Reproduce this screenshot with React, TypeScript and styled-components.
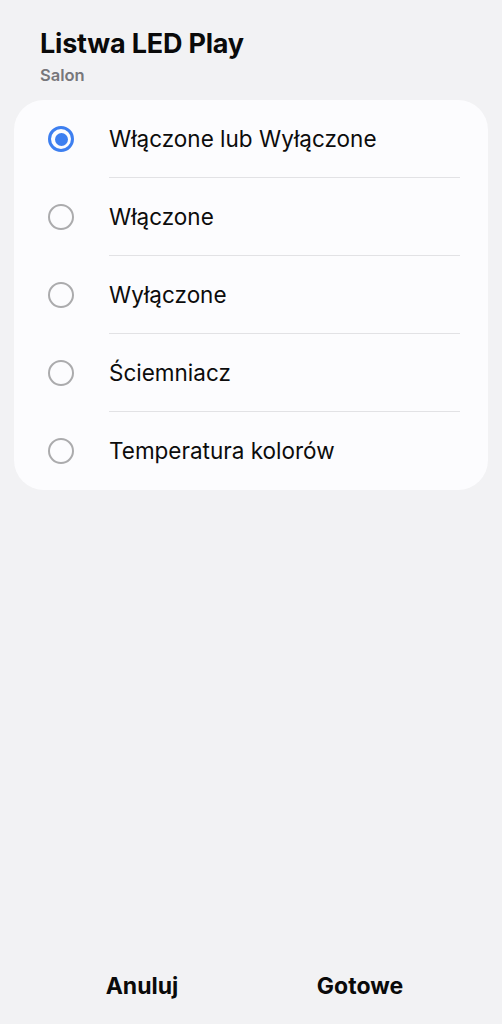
import React, { useState } from "react";
import styled, { createGlobalStyle } from "styled-components";

const Global = createGlobalStyle`
  html, body { margin: 0; padding: 0; background: #f2f2f4; }
  body { font-family: Inter, "Noto Sans", sans-serif; -webkit-font-smoothing: antialiased; }
  #root { min-height: 1024px; }
`;

const Page = styled.div`
  height: 1024px;
  display: flex;
  flex-direction: column;
  background: #f2f2f4;
  box-sizing: border-box;
`;

const Header = styled.header`
  padding: 28px 40px 0 40px;
  display: flex;
  flex-direction: column;
`;

const Title = styled.h1`
  margin: 0;
  font-size: 27px;
  line-height: 32px;
  font-weight: 700;
  color: #0a0a0a;
  letter-spacing: -0.2px;
`;

const Subtitle = styled.div`
  margin-top: 4px;
  font-size: 16.5px;
  line-height: 22px;
  font-weight: 600;
  color: #77777b;
`;

const Card = styled.div`
  margin: 14px 14px 0 14px;
  background: #fcfcfe;
  border-radius: 30px;
  display: flex;
  flex-direction: column;
`;

const Row = styled.button<{ $last?: boolean }>`
  all: unset;
  height: 78px;
  display: flex;
  align-items: center;
  cursor: pointer;
  position: relative;
  padding-left: 34px;
  &::after {
    content: "";
    display: ${(p) => (p.$last ? "none" : "block")};
    position: absolute;
    left: 95px;
    right: 28px;
    bottom: 0;
    height: 1px;
    background: #e2e2e5;
  }
`;

const Radio = styled.span<{ $on: boolean }>`
  width: 26px;
  height: 26px;
  box-sizing: border-box;
  border-radius: 50%;
  border: ${(p) => (p.$on ? "3px solid #3d7ff0" : "2px solid #ababad")};
  display: flex;
  align-items: center;
  justify-content: center;
  flex-shrink: 0;
  &::before {
    content: "";
    display: ${(p) => (p.$on ? "block" : "none")};
    width: 13px;
    height: 13px;
    border-radius: 50%;
    background: #3d7ff0;
  }
`;

const Label = styled.span`
  margin-left: 35px;
  font-size: 22.5px;
  line-height: 26px;
  color: #0c0c0c;
  font-weight: 400;
`;

const Spacer = styled.div`
  flex: 1;
`;

const Footer = styled.div`
  display: grid;
  grid-template-columns: 1fr 1fr;
  padding: 0 33px 0 33px;
  height: 76px;
  align-items: center;
`;

const FooterButton = styled.button`
  all: unset;
  text-align: center;
  font-size: 23px;
  font-weight: 700;
  color: #0a0a0a;
  cursor: pointer;
`;

const options = [
  "Włączone lub Wyłączone",
  "Włączone",
  "Wyłączone",
  "Ściemniacz",
  "Temperatura kolorów",
];

export default function App() {
  const [sel, setSel] = useState(0);
  return (
    <Page>
      <Global />
      <Header>
        <Title>Listwa LED Play</Title>
        <Subtitle>Salon</Subtitle>
      </Header>
      <Card>
        {options.map((o, i) => (
          <Row key={o} $last={i === options.length - 1} onClick={() => setSel(i)}>
            <Radio $on={sel === i} />
            <Label>{o}</Label>
          </Row>
        ))}
      </Card>
      <Spacer />
      <Footer>
        <FooterButton>Anuluj</FooterButton>
        <FooterButton>Gotowe</FooterButton>
      </Footer>
    </Page>
  );
}
